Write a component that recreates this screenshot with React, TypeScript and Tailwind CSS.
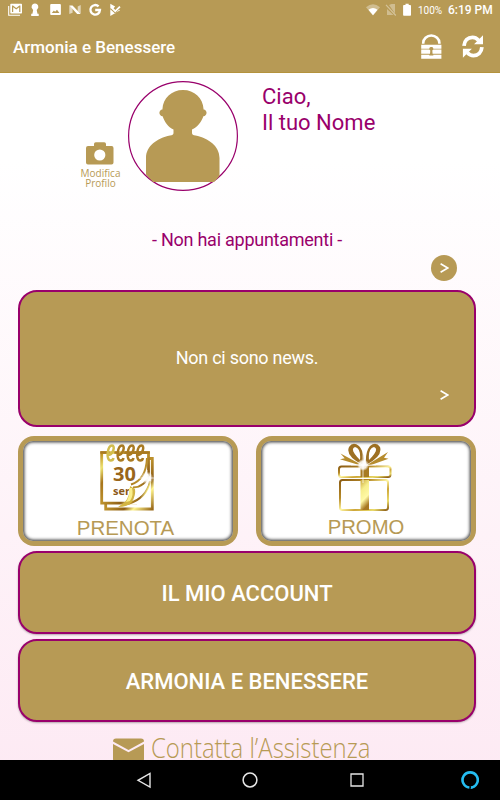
import type { ReactNode } from "react";

const GOLD = "#b79a55";

function StatusBar() {
  return (
    <div className="flex h-5 items-center justify-between pl-2 pr-[7px] text-white">
      <svg width="114" height="14" viewBox="0 0 114 14" fill="#fff">
        {/* gmail */}
        <path d="M0.7 3v9.300H12" fill="none" stroke="#fff" strokeWidth="1.1" />
        <path
          fillRule="evenodd"
          d="M3 .8h10.300q.7 0 .7.700v8.300q0 .7-.7.700H3q-.7 0-.7-.7V1.500Q2.300.8 3 .8zM4 2.500v6.600h1.200V4.300l3 2.100 3-2.100v4.800h1.200V2.500h-1L8.200 5 5 2.500z"
        />
        {/* keyhole */}
        <path d="M27 .5a3.300 3.300 0 0 1 2.300 5.700l-.6.7.8 3.900h1.200V13h-7.500v-2.200h1.200l.8-3.900-.6-.7A3.300 3.300 0 0 1 27 .5z" />
        {/* picture */}
        <path
          fillRule="evenodd"
          d="M43.200 1h8.700q1 0 1 1v9q0 1-1 1h-8.700q-1 0-1-1V2q0-1 1-1zM43.800 10h7.600L49 6.700l-1.900 2.100-1.200-1.300z"
        />
        {/* android nougat */}
        <path d="M61.300 2.500v8.500l3.300-1.200V5z" opacity=".6" />
        <path d="M69.700 3.500l3-1.500v8.500l-3-2.300z" opacity=".6" />
        <path d="M61.300 2.500h3.200l8.200 8.500h-3.500z" />
        {/* google */}
        <path
          d="M90.600 3.400A4.800 4.800 0 1 0 92 7h-4.800"
          fill="none"
          stroke="#fff"
          strokeWidth="2.300"
        />
        {/* play store */}
        <path d="M102.300.8l4.800 2.700-1.500 1.700 1.700 1.700 4-3.900 1.300 1.200-5.300 5.400-4.500-4.300-.5.500z" />
        <path d="M102.300 6.200l4.800 4.300 4-3.800 1 .6-9.800 5.700z" />
      </svg>

      <div className="flex items-center">
        <svg width="46" height="14" viewBox="0 0 46 14" fill="#fff">
          <path d="M0 4.300Q7 -1.600 14 4.300L7 12.500z" opacity=".35" />
          <path d="M2.500 6.700Q7 3.500 11.500 6.700L7 12.200z" />
          <path d="M23 2l2.500-1H29v9.500zM21 6l6.500 6H21z" opacity=".35" />
          <path d="M20 1.800L29.800 12.500" stroke="#fff" strokeWidth="1.200" opacity=".4" />
          <path d="M39.500.8h3.200v1.300h1.500q.8 0 .8.800v9q0 .8-.8.800h-6.300q-.8 0-.8-.8v-9q0-.8.800-.8h1.600z" />
        </svg>
        <span className="ml-1.5 w-6 text-[10px] whitespace-nowrap">100%</span>
        <span className="ml-1.5 w-[45px] text-[12px] font-medium whitespace-nowrap">
          6:19 PM
        </span>
      </div>
    </div>
  );
}

function Header() {
  return (
    <header className="h-[73px] shrink-0 border-b border-[#b4933d] bg-[#b79a55]">
      <StatusBar />
      <div className="flex h-[52px] items-center justify-between pr-[16px] pl-[13px]">
        <h1 className="pt-[3px] text-[17px] font-medium text-white">
          Armonia e Benessere
        </h1>
        <div className="flex items-center gap-5">
          {/* lock */}
          <svg width="21" height="25" viewBox="0 0 21 25">
            <path
              d="M2.200 9.800V9a8.100 7.500 0 0 1 16.200 0v.8"
              fill="none"
              stroke="#fff"
              strokeWidth="2.600"
            />
            <path d="M.2 10.700h20.200v4H.2zM.2 15.600h20.200v4.200H.2zM.2 20.700h20.200v4.100H.2z" fill="#fff" />
            <path
              d="M10.300 12.900a1.900 1.900 0 0 1 1 3.600l.3 3.500h.7v1.500H8.300v-1.500h.7l.3-3.500a1.900 1.900 0 0 1 1-3.600z"
              fill={GOLD}
            />
          </svg>
          {/* refresh */}
          <svg width="22" height="23" viewBox="0 0 22 23">
            <path
              d="M2 10.800C2.400 5.500 5.800 2.400 10.500 2.400q3.300 0 6 2.800M19.900 12.200c-.4 5.200-3.900 8.400-8.500 8.400q-3.300 0-6-2.800"
              fill="none"
              stroke="#fff"
              strokeWidth="3.800"
            />
            <path d="M21 .2v9h-9zM.9 22.700v-9h9z" fill="#fff" />
          </svg>
        </div>
      </div>
    </header>
  );
}

function Profile() {
  return (
    <section className="flex h-[150px] pt-2 pl-20">
      <div className="flex w-[41px] flex-col pt-[61px] text-[#b79a55]">
        <svg width="28" height="23" viewBox="0 0 28 23" className="ml-[6px]">
          <path
            d="M2 4h6V2q0-1.800 1.800-1.800h8.400Q20 .2 20 2v2h5.600Q27.500 4 27.500 6v14.500q0 2-2 2H2q-2 0-2-2V6q0-2 2-2z"
            fill={GOLD}
          />
          <circle cx="13.800" cy="13" r="5.600" fill="#fff" />
        </svg>
        <span className="mt-[3px] self-center font-['Open_Sans'] text-[10px] leading-[10px] whitespace-nowrap">
          Modifica
        </span>
        <span className="self-center font-['Open_Sans'] text-[10px] leading-[10px]">Profilo</span>
      </div>
      <svg width="110" height="110" viewBox="0 0 110 110" className="ml-[7px]">
        <circle cx="55" cy="55" r="54.400" fill="#fff" stroke="#99006b" strokeWidth="1.200" />
        <path
          d="M55 9c-11.500 0-20 8-20.600 19.500-4 .3-4 6.400.2 6.800C36.500 41 40 46 45.500 48.600v3.400q0 2-3.500 2.600C29 57.500 18 65 18 77v16.500q4.600 5 7 7.500h61q4-4 5.500-6V77c0-12-11-19.500-24-22.400q-3.500-.6-3.500-2.600v-3.400C69.500 46 73.500 41 75.400 35.300c4.200-.4 4.200-6.500.2-6.800C75 17 66.500 9 55 9z"
          fill={GOLD}
        />
      </svg>
      <p className="ml-6 pt-[3px] text-[22px] leading-[26px] text-[#99006b]">
        Ciao,
        <br />
        Il tuo Nome
      </p>
    </section>
  );
}

function Arrow() {
  return (
    <svg width="9" height="10" viewBox="0 0 9 10" fill="none" stroke="#fff" strokeWidth="1.600">
      <path d="M.6.800L7.700 5 .6 9.200" />
    </svg>
  );
}

function Appointments() {
  return (
    <section className="flex h-[67px] flex-col pt-1 pr-[43px]">
      <p className="-mr-[37px] text-center text-[18px] leading-[26px] tracking-[-0.25px] text-[#99006b]">
        - Non hai appuntamenti -
      </p>
      <button className="mt-0.5 flex size-[26px] items-center justify-center self-end rounded-full bg-[#b79a55]">
        <Arrow />
      </button>
    </section>
  );
}

function News() {
  return (
    <section className="flex h-[137px] flex-col items-center rounded-[19px] border-2 border-[#99006b] bg-[#b79a55] pt-[53px] text-white">
      <p className="text-[18px] leading-[26px] tracking-[-0.26px]">Non ci sono news.</p>
      <div className="mt-[19px] mr-[25px] self-end">
        <Arrow />
      </div>
    </section>
  );
}

function CalendarIcon() {
  return (
    <svg width="60" height="68" viewBox="0 0 60 68" className="mr-[3px]">
      <defs>
        <linearGradient id="cal" x1="0" y1="0" x2="1" y2="1">
          <stop offset="0" stopColor="#bc8b1b" />
          <stop offset=".15" stopColor="#eee373" />
          <stop offset=".3" stopColor="#a7751b" />
          <stop offset=".5" stopColor="#bd922d" />
          <stop offset=".7" stopColor="#8e5e16" />
          <stop offset=".8" stopColor="#fff58e" />
          <stop offset="1" stopColor="#996919" />
        </linearGradient>
        <radialGradient id="spark">
          <stop offset="0" stopColor="#fff" />
          <stop offset=".45" stopColor="#fff" stopOpacity=".9" />
          <stop offset="1" stopColor="#fff" stopOpacity="0" />
        </radialGradient>
      </defs>
      <path d="M51 14.500h4.300v50.500H8.700v-6" fill="none" stroke="url(#cal)" strokeWidth="2.800" />
      <path d="M51.500 33V8.600H4.700v50.500H40" fill="none" stroke="url(#cal)" strokeWidth="2.800" />
      <path d="M3.300 8.500h9m5 0h5m5 0h5m5 0h15.500" stroke="#a97a22" strokeWidth="2.500" />
      {[13.500, 23.500, 33.500, 43].map((x, i) => (
        <path
          key={x}
          transform={`translate(${x} 0)`}
          d="M-3 11c6 0 8-9.500 4.500-9.500C-3 1.500-5 16.500.3 16.500q2.200 0 2.700-2.500"
          fill="none"
          stroke={i === 0 ? "#d2bd4e" : "#a97a22"}
          strokeWidth="2.500"
        />
      ))}
      <text x="16" y="37" fill="#99661b" fontFamily="Open Sans" fontWeight="700" fontSize="20">
        30
      </text>
      <text x="16" y="51" fill="#8c5918" fontFamily="Open Sans" fontWeight="700" fontSize="11">
        ser
      </text>
      {/* turned page */}
      <path d="M49 28Q45 40 36 40.500q0 3-4 6q2 6-4 14h14q10-10 11-28z" fill="#fff" />
      <path
        d="M50 14Q49 36 34 40.500M52 31Q48 43 36 43.500M53 37Q50 54 31 60"
        fill="none"
        stroke="url(#cal)"
        strokeWidth="2"
      />
      <path d="M33 42q0 10-5 16l-7 5q10 0 14-5 4-7 3-13z" fill="#d3b544" />
      <path d="M32 44q1 8-3 14l4-1q4-6 2-13z" fill="#fbf08c" />
      <circle cx="50" cy="34" r="6.500" fill="url(#spark)" />
      <path d="M50 26v16M42 34h16" stroke="#fff" strokeOpacity=".7" />
    </svg>
  );
}

function GiftIcon() {
  return (
    <svg width="58" height="70" viewBox="0 0 58 70" className="-mt-0.5">
      <defs>
        <linearGradient id="gift" x1="0" y1="0" x2="1" y2="1">
          <stop offset="0" stopColor="#8b5c14" />
          <stop offset=".3" stopColor="#b68a29" />
          <stop offset=".5" stopColor="#fff6a0" />
          <stop offset=".65" stopColor="#cda63a" />
          <stop offset=".85" stopColor="#eadb6c" />
          <stop offset="1" stopColor="#8b5c14" />
        </linearGradient>
        <linearGradient id="ribbon" x1="0" y1="0" x2=".3" y2="1">
          <stop offset="0" stopColor="#c9a63c" />
          <stop offset=".35" stopColor="#f6ee8c" />
          <stop offset=".7" stopColor="#fff9a6" />
          <stop offset="1" stopColor="#a87822" />
        </linearGradient>
        <radialGradient id="glow">
          <stop offset="0" stopColor="#fff" />
          <stop offset=".6" stopColor="#fff" stopOpacity=".85" />
          <stop offset="1" stopColor="#fff" stopOpacity="0" />
        </radialGradient>
      </defs>
      {/* bow */}
      <path
        fillRule="evenodd"
        d="M26 23Q8 14 12 5q4-6 10-1 6 6 4 19zM23 18q1-12-5-13-6 2 5 13zM29 23Q46 14 43 5q-4-6-10-1-5 6-4 19zM32 18q-1-12 5-13 6 2-5 13z"
        fill="#9d7023"
      />
      <path d="M25 23L3.500 11.500l4.200 4.800-4.700 1 20 6zM30 23l21-13-4 5.700 4.500 1L34 23z" fill="#b68c2e" />
      <rect x="2" y="24.500" width="51.500" height="10.500" rx="2.500" fill="#fff" stroke="url(#gift)" strokeWidth="2" />
      <rect x="3" y="38" width="48" height="30" rx="2.500" fill="#fff" stroke="url(#gift)" strokeWidth="2" />
      <path d="M23.500 24.500H32V35h-8.500z" fill="#a77b24" />
      <path d="M23.500 38H32v30h-8.500z" fill="url(#ribbon)" />
      <circle cx="26" cy="23" r="6" fill="url(#glow)" />
      <path d="M26 7v34M14 23h25" stroke="#fff" strokeOpacity=".6" strokeWidth="1.200" />
    </svg>
  );
}

function Tile({ children }: { children: ReactNode }) {
  return (
    <button className="h-[110px] w-[220px] rounded-[16px] bg-[#b79a55] p-[5px]">
      <div className="flex h-full flex-col items-center rounded-[10px] bg-white pt-[3px] text-[#b79a55] shadow-[inset_0_0_3px_1.500px_#555]">
        {children}
      </div>
    </button>
  );
}

function BigButton({ children }: { children: ReactNode }) {
  return (
    <button className="h-[83px] w-full rounded-[19px] border-2 border-[#99006b] bg-[#b79a55] pt-[2px] text-[22px] font-medium text-white shadow-[0_1px_2px_rgba(0,0,0,0.3)]">
      {children}
    </button>
  );
}

function Support() {
  return (
    <a className="mt-3 flex h-[26px] items-start pl-[95px] text-[#b79a55]">
      <svg width="31" height="24" viewBox="0 0 31 24" className="mt-1 shrink-0">
        <path
          d="M0 3.500Q0 .4 3 .4h25q3 0 3 3.100L15.500 12zM0 6l15.500 8.200L31 6v15q0 2.500-2.500 2.500h-26Q0 23.500 0 21z"
          fill={GOLD}
        />
      </svg>
      <span className="ml-[7px] origin-left scale-x-[0.885] font-['Open_Sans'] text-[27px] leading-[27px] font-light whitespace-nowrap">
        Contatta l’Assistenza
      </span>
    </a>
  );
}

function NavBar() {
  return (
    <nav className="flex h-10 shrink-0 items-center bg-black pl-[136px]">
      <svg width="16" height="18" viewBox="0 0 16 18" fill="none" stroke="#e6e6e6" strokeWidth="1.400">
        <path d="M14 2.500v13.500L2 9.300z" />
      </svg>
      <svg width="16" height="16" viewBox="0 0 16 16" fill="none" stroke="#e6e6e6" strokeWidth="1.500" className="ml-[90px]">
        <circle cx="8" cy="8" r="6.900" />
      </svg>
      <svg width="14" height="14" viewBox="0 0 14 14" fill="none" stroke="#e6e6e6" strokeWidth="1.300" className="ml-[92px]">
        <path d="M1 1h12v12H1z" />
      </svg>
      {/* assistant ring, open at the bottom */}
      <svg width="18" height="18" viewBox="0 0 18 18" className="ml-[97px]">
        <path
          d="M8.400 16.500A7.600 7.600 0 1 1 9.900 16.500"
          fill="none"
          stroke="#25bdf1"
          strokeWidth="2.600"
        />
        <path d="M9.300 18q.8-2 3-3.200l1.800 1.300q-2 1.700-4.800 1.900z" fill="#25bdf1" />
      </svg>
    </nav>
  );
}

export default function App() {
  return (
    <div className="flex h-[800px] w-[500px] flex-col overflow-hidden bg-linear-to-b from-white from-20% to-[#fde9f3] font-['Roboto',sans-serif]">
      <Header />
      <main className="h-[687px] overflow-hidden">
        <Profile />
        <Appointments />
        <div className="flex flex-col pr-6 pl-[18px]">
          <News />
          <div className="mt-[9px] mb-[5px] flex justify-between">
            <Tile>
              <CalendarIcon />
              <span className="mt-1 mr-[5px] font-['Liberation_Sans'] text-[20.500px] leading-[24px]">
                PRENOTA
              </span>
            </Tile>
            <Tile>
              <GiftIcon />
              <span className="mt-[3px] font-['Liberation_Sans'] text-[20.300px] leading-[24px]">
                PROMO
              </span>
            </Tile>
          </div>
          <div className="flex flex-col gap-[5px]">
            <BigButton>IL MIO ACCOUNT</BigButton>
            <BigButton>ARMONIA E BENESSERE</BigButton>
          </div>
          <Support />
        </div>
      </main>
      <NavBar />
    </div>
  );
}
